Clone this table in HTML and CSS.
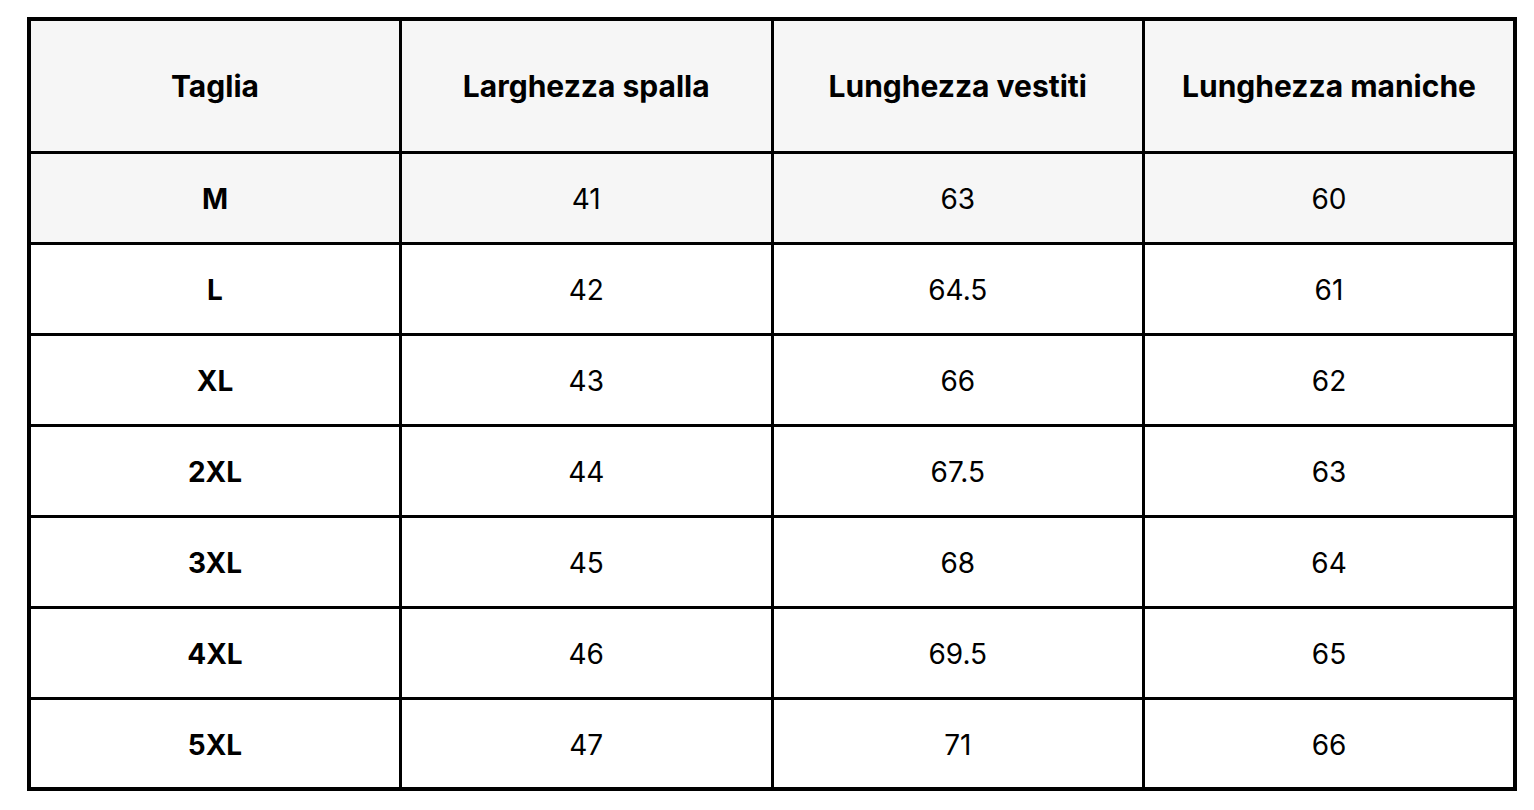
FILE: index.html
```html
<!DOCTYPE html>
<html>
<head>
<meta charset="utf-8">
<link rel="stylesheet" href="styles.css">
</head>
<body>
<table class="sizes">
  <thead>
    <tr class="head"><th>Taglia</th><th>Larghezza spalla</th><th>Lunghezza vestiti</th><th>Lunghezza maniche</th></tr>
  </thead>
  <tbody>
    <tr class="shaded"><th>M</th><td>41</td><td>63</td><td>60</td></tr>
    <tr><th>L</th><td>42</td><td>64.5</td><td>61</td></tr>
    <tr><th>XL</th><td>43</td><td>66</td><td>62</td></tr>
    <tr><th>2XL</th><td>44</td><td>67.5</td><td>63</td></tr>
    <tr><th>3XL</th><td>45</td><td>68</td><td>64</td></tr>
    <tr><th>4XL</th><td>46</td><td>69.5</td><td>65</td></tr>
    <tr><th>5XL</th><td>47</td><td>71</td><td>66</td></tr>
  </tbody>
</table>
</body>
</html>
```
FILE: styles.css
```css
html, body {
  margin: 0;
  padding: 0;
  background: #ffffff;
}
body {
  padding: 17px 0 0 27px;
  font-family: Inter, "Open Sans", sans-serif;
  color: #000;
}
.sizes {
  border-collapse: collapse;
  width: 1490px;
  table-layout: fixed;
  border: 4px solid #000;
}
.sizes th, .sizes td {
  border: 3px solid #000;
  text-align: center;
  vertical-align: middle;
  padding: 3px 0 0;
  font-size: 28px;
  line-height: 1;
}
.sizes th {
  font-weight: 700;
}
.sizes thead th {
  font-size: 30px;
  padding-top: 0;
}
.sizes td {
  font-weight: 400;
}
.head {
  height: 133px;
  background: #f6f6f6;
}
.sizes tbody tr {
  height: 91px;
}
.sizes tbody tr.shaded {
  background: #f6f6f6;
}
```
